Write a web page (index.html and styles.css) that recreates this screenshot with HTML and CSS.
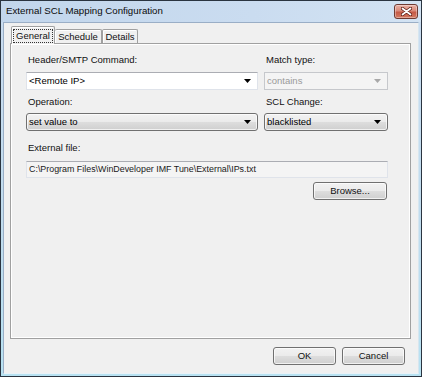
FILE: index.html
```html
<!DOCTYPE html>
<html>
<head>
<meta charset="utf-8">
<link rel="stylesheet" href="styles.css">
</head>
<body>
<div class="window">
  <div class="titlebar">
    <span class="title">External SCL Mapping Configuration</span>
    <div class="close">
      <svg width="11" height="9" viewBox="0 0 11 9"><path d="M1.5 1.5L9.5 7.5M9.5 1.5L1.5 7.5" stroke="#5a1a12" stroke-width="3.4" stroke-linecap="round"/><path d="M1.5 1.5L9.5 7.5M9.5 1.5L1.5 7.5" stroke="#ffffff" stroke-width="1.8" stroke-linecap="round"/></svg>
    </div>
  </div>
  <div class="client">
    <div class="tabs">
      <div class="tab tab-active"><span class="focus">General</span></div>
      <div class="tab">Schedule</div>
      <div class="tab">Details</div>
    </div>
    <div class="panel">
      <div class="grid">
        <div class="lbl">Header/SMTP Command:</div>
        <div class="lbl">Match type:</div>
        <div class="combo combo-edit"><span class="val">&lt;Remote IP&gt;</span><span class="arrow"><svg width="7" height="4" viewBox="0 0 7 4"><path d="M0 0H7L3.5 4Z" fill="#000"/></svg></span></div>
        <div class="combo combo-disabled"><span class="val">contains</span><span class="arrow"><svg width="7" height="4" viewBox="0 0 7 4"><path d="M0 0H7L3.5 4Z" fill="#a8a8a8"/></svg></span></div>
        <div class="lbl lbl-2">Operation:</div>
        <div class="lbl lbl-2">SCL Change:</div>
        <div class="combo combo-btn"><span class="val">set value to</span><span class="arrow"><svg width="7" height="4" viewBox="0 0 7 4"><path d="M0 0H7L3.5 4Z" fill="#000"/></svg></span></div>
        <div class="combo combo-btn"><span class="val">blacklisted</span><span class="arrow"><svg width="7" height="4" viewBox="0 0 7 4"><path d="M0 0H7L3.5 4Z" fill="#000"/></svg></span></div>
      </div>
      <div class="lbl lbl-file">External file:</div>
      <div class="textbox">C:\Program Files\WinDeveloper IMF Tune\External\IPs.txt</div>
      <div class="browse-row"><div class="btn btn-browse">Browse...</div></div>
    </div>
    <div class="footer">
      <div class="btn btn-dlg">OK</div>
      <div class="btn btn-dlg">Cancel</div>
    </div>
  </div>
</div>
</body>
</html>
```
FILE: styles.css
```css
* { box-sizing: border-box; }
html, body { margin: 0; padding: 0; background: #ffffff; }
body {
  font-family: "Liberation Sans", Arial, sans-serif;
  font-size: 9.5px;
  color: #000;
}
.window {
  width: 422px;
  height: 377px;
  border: 1px solid #2a3440;
  background: linear-gradient(180deg, #bcd3ec 0%, #c9dcf0 6%, #c0dcee 60%, #b8e2f2 100%);
  display: flex;
  flex-direction: column;
}
.titlebar {
  height: 21px;
  display: flex;
  align-items: flex-start;
  justify-content: space-between;
  background: linear-gradient(90deg, #c2d6ec 0%, #cadcf0 60%, #d3e3f3 100%);
}
.title {
  font-size: 9.7px;
  line-height: 20px;
  padding-left: 5px;
  color: #0a0a0a;
}
.close {
  width: 24px;
  height: 15px;
  margin-top: 3px;
  margin-right: 3px;
  border: 1px solid #6e3a32;
  border-radius: 3px;
  background: linear-gradient(180deg, #eab0a4 0%, #d98a7a 45%, #c55a47 55%, #d37a62 100%);
  display: flex;
  align-items: center;
  justify-content: center;
  box-shadow: inset 0 0 0 1px rgba(255,255,255,0.35);
}
.client {
  flex: 1;
  margin: 0 2px 2px 2px;
  border: 1px solid #9aaec6;
  border-bottom-color: #e8f2f8;
  border-right-color: #d6e6f0;
  background: #f0f0f0;
  padding: 3px 7px 8px 6px;
  display: flex;
  flex-direction: column;
}
.tabs {
  height: 18px;
  margin-bottom: -1px;
  margin-left: 1px;
  display: flex;
  align-items: flex-start;
  position: relative;
  z-index: 1;
}
.tab {
  height: 14px;
  margin-top: 3px;
  border: 1px solid #a0a0a0;
  border-bottom: none;
  box-shadow: inset 1px 1px 0 #ffffff;
  background: #f0f0f0;
  line-height: 13px;
  text-align: center;
  border-radius: 2px 2px 0 0;
  color: #111;
}
.tab:nth-child(2) { width: 47px; border-left: none; }
.tab:nth-child(3) { width: 36px; }
.tab-active {
  width: 44px;
  height: 18px;
  margin-top: 0;
  padding-top: 2px;
  line-height: 13px;
}
.focus {
  display: inline-block;
  border: 1px dotted #333;
  padding: 0 2px;
  line-height: 12px;
}
.panel {
  height: 296px;
  border: 1px solid #a0a0a0;
  box-shadow: inset 1px 1px 0 #ffffff, inset -1px -1px 0 #ffffff;
  background: #f0f0f0;
  padding: 9px 22px 0 15px;
}
.grid {
  display: grid;
  grid-template-columns: 232px 124px;
  column-gap: 6px;
}
.lbl {
  height: 14px;
  line-height: 14px;
  padding-left: 2px;
  margin-bottom: 5px;
  white-space: nowrap;
  color: #111;
}
.lbl-2 {
  margin-top: 5px;
  margin-bottom: 4px;
}
.combo {
  height: 18px;
  display: flex;
  align-items: center;
  justify-content: space-between;
  line-height: 16px;
}
.val { padding-left: 2px; white-space: nowrap; }
.arrow {
  width: 12px;
  height: 16px;
  display: flex;
  align-items: center;
  justify-content: center;
  margin-right: 4px;
}
.combo-edit {
  background: #ffffff;
  border: 1px solid #dfe3ea;
  border-top-color: #abadb3;
}
.combo-disabled {
  background: #f4f4f4;
  border: 1px solid #c6c8cc;
  color: #9a9a9a;
}
.combo-btn {
  border: 1px solid #707070;
  border-radius: 3px;
  background: linear-gradient(180deg, #f2f2f2 0%, #ebebeb 48%, #dddddd 52%, #cfcfcf 100%);
  box-shadow: inset 0 0 0 1px rgba(255,255,255,0.7);
}
.lbl-file {
  margin-top: 10px;
  margin-bottom: 6px;
}
.textbox {
  height: 17px;
  width: 362px;
  border: 1px solid #dfe3ea;
  border-top-color: #abadb3;
  background: #f4f4f4;
  line-height: 15px;
  padding-left: 2px;
  white-space: nowrap;
  font-size: 8.9px;
  color: #1a1a1a;
}
.browse-row {
  display: flex;
  justify-content: flex-end;
  width: 361px;
  margin-top: 4px;
}
.btn {
  height: 18px;
  border: 1px solid #707070;
  border-radius: 3px;
  background: linear-gradient(180deg, #f2f2f2 0%, #ebebeb 48%, #dddddd 52%, #cfcfcf 100%);
  box-shadow: inset 0 0 0 1px rgba(255,255,255,0.7);
  display: flex;
  align-items: center;
  justify-content: center;
  line-height: 16px;
  color: #111;
}
.btn-browse { width: 74px; }
.footer {
  margin-top: 8px;
  display: flex;
  justify-content: flex-end;
  gap: 6px;
  padding-right: 6px;
}
.btn-dlg { width: 63px; }
```
